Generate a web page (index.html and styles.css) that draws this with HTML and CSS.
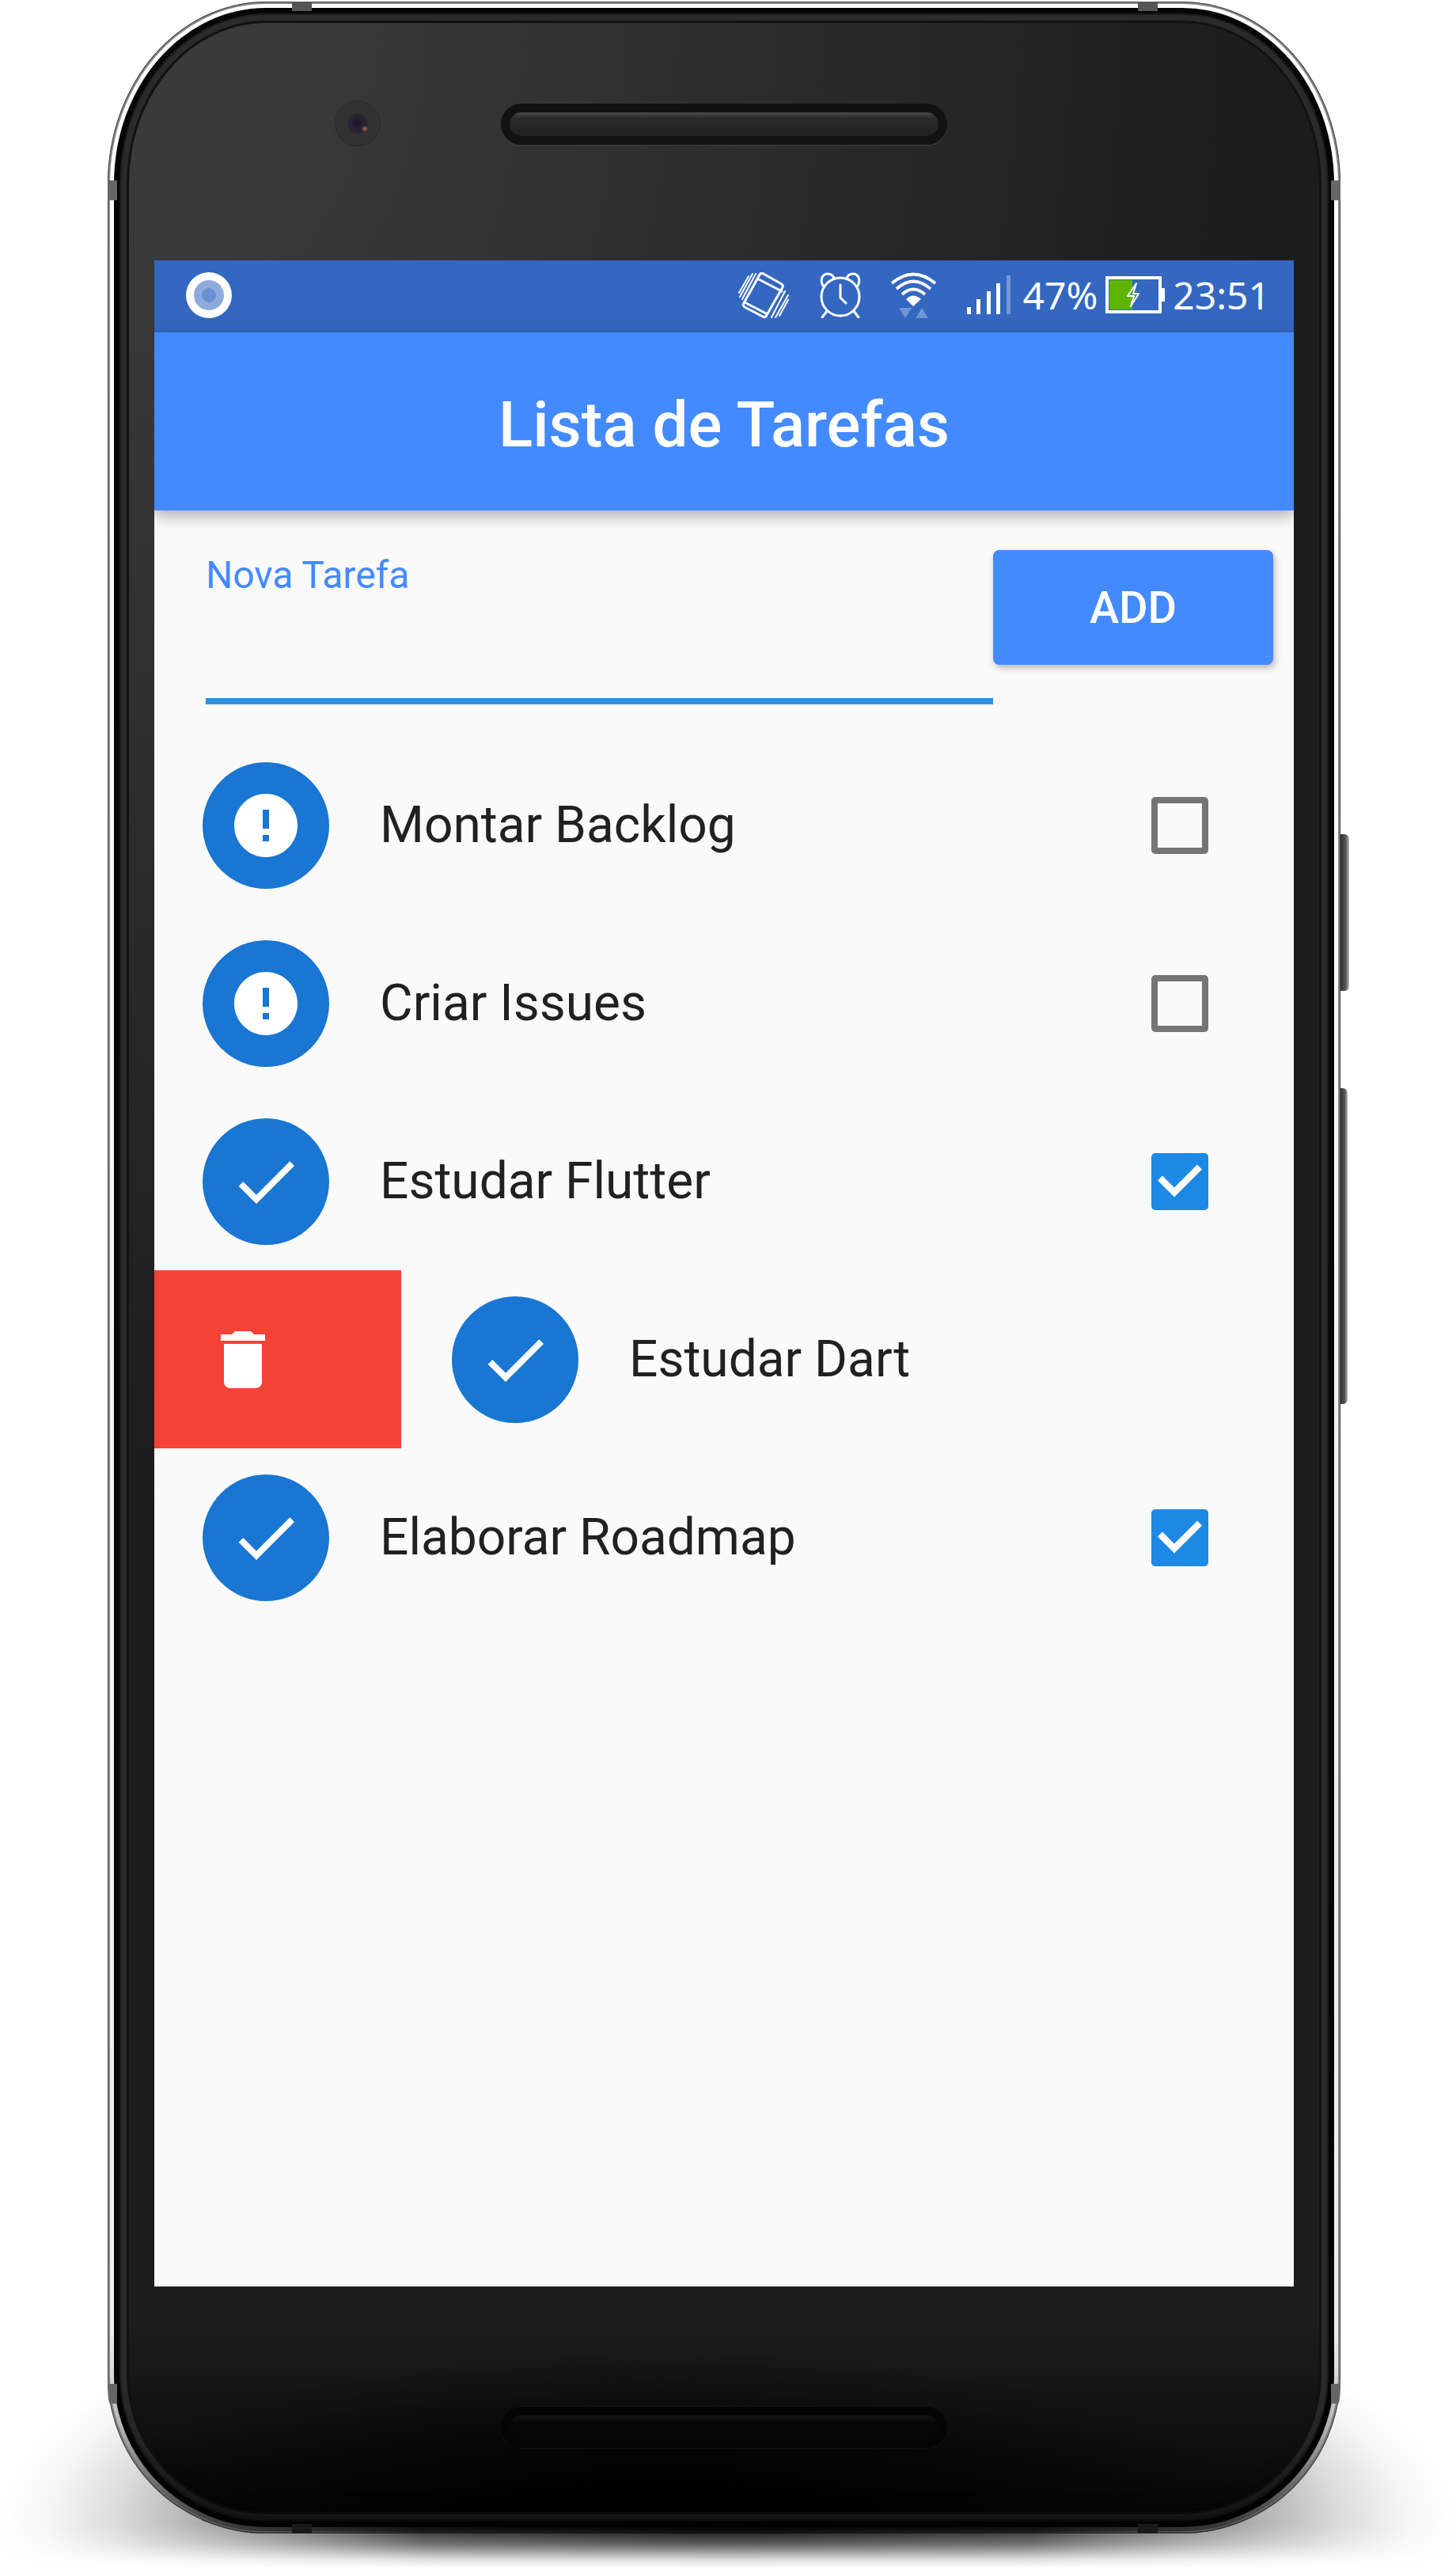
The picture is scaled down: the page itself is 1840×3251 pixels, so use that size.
FILE: index.html
```html
<!DOCTYPE html>
<html lang="pt-BR">
<head>
<meta charset="utf-8">
<meta name="viewport" content="width=device-width, initial-scale=1">
<title>Lista de Tarefas</title>
<link rel="stylesheet" href="styles.css">
</head>
<body>
<svg class="sprite" aria-hidden="true">
  <symbol id="icon-check" viewBox="0 0 24 24"><path d="M9 16.17 4.83 12l-1.42 1.41L9 19 21 7l-1.41-1.41z"/></symbol>
  <symbol id="icon-error" viewBox="0 0 24 24"><path d="M12 2C6.48 2 2 6.48 2 12s4.48 10 10 10 10-4.48 10-10S17.52 2 12 2zm1 15h-2v-2h2v2zm0-4h-2V7h2v6z"/></symbol>
</svg>

<div class="device">
  <span class="side-key power"></span>
  <span class="side-key volume"></span>
  <span class="band top left"></span>
  <span class="band top right"></span>
  <span class="band bottom left"></span>
  <span class="band bottom right"></span>
  <span class="band side upper west"></span>
  <span class="band side upper east"></span>
  <span class="band side lower west"></span>
  <span class="band side lower east"></span>

  <div class="glass">
    <div class="forehead">
      <span class="camera"></span>
      <span class="speaker"></span>
    </div>

    <div class="screen">
      <div class="status-bar">
        <svg class="record" width="58" height="58" viewBox="0 0 58 58"><circle cx="29" cy="29" r="29" fill="#fff"/><circle cx="29" cy="29" r="19" fill="#8faadc"/><circle cx="29" cy="29" r="9" fill="#6a90d2"/></svg>
        <div class="status-icons">
          <svg width="66" height="58" viewBox="0 0 66 58" fill="none" stroke="#fff" stroke-width="3" stroke-linecap="round" stroke-linejoin="round">
            <path d="M28 3q2-3 5-1l23 13q2 2 1 4L37 54q-2 4-5 2L9 44q-3-2-1-5zM27 9l29 15M9 38l27 14"/>
            <path d="M23 2 6 34M19 2 3 31M14 5 2 26M60 24 43 57M64 29 48 57M64 35 53 55" stroke-width="2"/>
          </svg>
          <svg width="52" height="58" viewBox="0 0 52 58" fill="none" stroke="#fff" stroke-width="3" stroke-linecap="round" stroke-linejoin="round">
            <ellipse cx="26" cy="31" rx="24" ry="24"/>
            <path d="M4 17C0 10 3 2 10 2c4 0 7 2 8 6M48 17c4-7 1-15-6-15-4 0-7 2-8 6M26 16v16l7 7M9 49l-6 8M43 49l6 8"/>
          </svg>
          <svg width="58" height="58" viewBox="0 0 58 58" fill="none" stroke="#fff" stroke-width="4">
            <path d="M1 14Q28-9 56 14M7 21q21-19 43 0M14 28q14-13 29 0"/>
            <path d="M19 34q9-9 19 0l-10 9z" fill="#fff" stroke="none"/>
            <path d="M10 45h16l-8 13zM31 58l8-13 8 13z" fill="#7094d6" stroke="none"/>
          </svg>
          <svg width="56" height="50" viewBox="0 0 56 50" fill="#fff">
            <path d="M0 40h5v9H0zM12 30h5v19h-5zM25 20h5v29h-5zM37 10h5v39h-5z"/>
            <path d="M50 0h5v49h-5z" fill="#7597d6"/>
          </svg>
        </div>
        <div class="status-text">
          <span>47%</span>
          <svg width="75" height="48" viewBox="0 0 75 48">
            <path d="M5 5h29v37H5z" fill="#5fb400"/>
            <path d="M2 2h67v43H2z" fill="none" stroke="#fff" stroke-width="4"/>
            <path d="M70 15h5v17h-5z" fill="#fff"/>
            <path d="M39 9 28 25h8l-4 13 10-16h-7z" fill="#4a9c3c" stroke="#fff" stroke-width="2" stroke-linejoin="round"/>
          </svg>
          <time>23:51</time>
        </div>
      </div>

      <header class="app-bar"><h1>Lista de Tarefas</h1></header>

      <form class="new-task">
        <div class="field">
          <label for="task">Nova Tarefa</label>
          <input id="task" type="text">
        </div>
        <button class="add" type="button">ADD</button>
      </form>

      <ul class="tasks">
        <li class="row"><label class="task">
          <span class="avatar"><svg><use href="#icon-error"/></svg></span>
          <span class="name">Montar Backlog</span>
          <input type="checkbox">
        </label></li>
        <li class="row"><label class="task">
          <span class="avatar"><svg><use href="#icon-error"/></svg></span>
          <span class="name">Criar Issues</span>
          <input type="checkbox">
        </label></li>
        <li class="row"><label class="task">
          <span class="avatar"><svg><use href="#icon-check"/></svg></span>
          <span class="name">Estudar Flutter</span>
          <input type="checkbox" checked>
        </label></li>
        <li class="row swiped">
          <button class="delete" type="button" aria-label="Excluir"><svg viewBox="0 0 24 24"><path d="M6 19c0 1.100.9 2 2 2h8c1.100 0 2-.9 2-2V7H6zM19 4h-3.500l-1-1h-5l-1 1H5v2h14z"/></svg></button>
          <div class="task">
            <span class="avatar"><svg><use href="#icon-check"/></svg></span>
            <span class="name">Estudar Dart</span>
          </div>
        </li>
        <li class="row"><label class="task">
          <span class="avatar"><svg><use href="#icon-check"/></svg></span>
          <span class="name">Elaborar Roadmap</span>
          <input type="checkbox" checked>
        </label></li>
      </ul>
    </div>

    <div class="chin"><span class="speaker"></span></div>
  </div>
</div>
</body>
</html>
```

FILE: styles.css
```css
* { box-sizing: border-box; }

body {
  margin: 0;
  padding: 2px 146px 50px 136px;
  background: #fff;
  font-family: Roboto, "Liberation Sans", sans-serif;
  overflow-x: hidden;
}

.sprite { display: none; }

/* Phone body */
.device {
  position: relative;
  z-index: 0;
  padding: 8px;
  border-radius: 200px / 230px 230px 200px 200px;
  background: linear-gradient(#fff 0, #eee 92%, #bbb 96%, #555 100%);
  box-shadow: inset 0 0 0 1px #444, inset 0 0 0 3px #888;
}

/* Shadow on the ground below the phone */
.device::before {
  content: "";
  position: absolute;
  z-index: -2;
  inset: auto -146px -44px -136px;
  height: 340px;
  background: radial-gradient(ellipse 50% 100% at 50% 85%, #000 0, #000000d9 42%, #000000a6 52%, #00000059 70%, #00000024 84%, #0000000a 93%, transparent 100%);
  mask-image: linear-gradient(#000 84%, #000000a6 91%, #00000021 97%, transparent);
}

.side-key {
  position: absolute;
  z-index: -1;
  left: 100%;
  border-radius: 0 6px 6px 0;
  background: linear-gradient(90deg, #333, #555 60%, #bbb);
}
.power { top: 1052px; width: 11px; height: 198px; }
.volume { top: 1373px; width: 9px; height: 399px; }

/* Antenna bands */
.band { position: absolute; background: #555; z-index: 1; }
.band.top, .band.bottom { width: 25px; height: 12px; }
.band.top { top: 0; }
.band.bottom { bottom: 0; background: #191919; }
.band.left { left: 233px; }
.band.right { right: 231px; }
.band.side { width: 12px; height: 25px; background: #666; }
.band.west { left: 0; }
.band.east { right: 0; }
.band.upper { top: 226px; }
.band.lower { bottom: 164px; }
.band.lower.west { border-bottom-left-radius: 3px 25px; }
.band.lower.east { border-bottom-right-radius: 3px 25px; }

.glass {
  padding: 0 51px;
  border-radius: 192px / 222px 222px 192px 192px;
  background:
    linear-gradient(transparent 92%, #000000b0 99%),
    radial-gradient(ellipse 50% 7% at 45% 100%, #000 20%, transparent),
    radial-gradient(ellipse 95% 60% at 0 0, #3a3a3a 15%, transparent);
  background-color: #1c1c1c;
  box-shadow: inset 0 -30px 20px -10px #000000b0, inset 0 0 0 7px #060606, inset 0 0 0 9px #1c1c1c, inset 0 0 0 16px #2b2b2b, inset 0 0 0 19px #121212;
}

.forehead, .chin {
  display: grid;
  grid-template-columns: 1fr 564px 1fr;
}
.forehead { height: 319px; padding-top: 117px; }
.chin { height: 304px; padding-top: 152px; }

.camera {
  justify-self: end;
  width: 58px;
  height: 58px;
  margin-right: 152px;
  border-radius: 50%;
  border: 1px solid #292929;
  background:
    radial-gradient(circle at 66% 62%, #c07060 0, #c0706000 8%),
    radial-gradient(circle, #1c1826 0, #2b2438 26%, #29262e 30%, #323232 34%);
}

.speaker {
  grid-column: 2;
  height: 52px;
  margin-top: 4px;
  border: 11px solid #121212;
  border-radius: 26px;
  background: linear-gradient(#4a4a4a 0, #2b2b2b 25%, #202020);
  box-shadow: 0 1px 1px #484848;
}
.chin .speaker {
  margin-top: 0;
  border-color: #040404;
  background: linear-gradient(#161616, #060606 30%);
  box-shadow: 0 0 1px 1px #121212;
}

/* App */
.screen {
  aspect-ratio: 9 / 16;
  overflow: hidden;
  background: #fafafa;
  color: #212121;
}

.status-bar {
  display: flex;
  align-items: center;
  height: 91px;
  padding: 0 30px 4px 40px;
  background: #3367c0;
  color: #fff;
}
.record { margin-right: auto; }
.status-icons { display: flex; align-items: center; gap: 38px; margin-right: 14px; }
.status-text { display: flex; align-items: center; gap: 10px; font: 48px/60px "Noto Sans", sans-serif; }

.app-bar {
  display: flex;
  align-items: center;
  justify-content: center;
  height: 225px;
  padding-top: 8px;
  background: #448aff;
  color: #fff;
  box-shadow: 0 6px 20px #00000055;
}
.app-bar h1 { margin: 0; font-size: 80px; font-weight: 500; line-height: 96px; }

.new-task {
  display: flex;
  align-items: flex-start;
  padding: 50px 26px 40px 65px;
}
.field { display: flex; flex: 1; flex-direction: column; min-width: 0; }
.field label { font-size: 48px; line-height: 64px; color: #448aff; }
.field input {
  height: 131px;
  padding: 0;
  border: 0;
  border-bottom: 8px solid #2a93ea;
  outline: 0;
  background: none;
  color: inherit;
  font: 64px/80px Roboto, sans-serif;
}
.add {
  width: 354px;
  height: 145px;
  padding: 0;
  border: 0;
  border-radius: 8px;
  background: #448aff;
  color: #fff;
  font: 500 56px/64px Roboto, sans-serif;
  box-shadow: 2px 4px 8px #00000044;
}

.tasks { margin: 0; padding: 0; list-style: none; }
.row { display: flex; height: 225px; overflow: hidden; }
.task {
  display: flex;
  flex: none;
  align-items: center;
  gap: 64px;
  width: 100%;
  padding: 0 108px 0 61px;
}
.avatar {
  display: grid;
  place-items: center;
  width: 160px;
  height: 160px;
  border-radius: 50%;
  background: #1976d2;
}
.avatar svg, .delete svg { width: 96px; height: 96px; fill: #fff; }
.name { flex: 1; font-size: 64px; line-height: 80px; }

.task input {
  appearance: none;
  width: 72px;
  height: 72px;
  margin: 0;
  border: 8px solid #757575;
  border-radius: 5px;
}
.task input:checked { border: 0; background: #1e88e5; }
.task input:checked::before {
  content: "";
  display: block;
  height: 100%;
  background: #fff;
  clip-path: polygon(8px 35px, 14px 29px, 29px 44px, 58px 15px, 64px 21px, 29px 56px);
}

.swiped { gap: 3px; }
.delete {
  display: flex;
  flex: none;
  align-items: center;
  width: 312px;
  padding: 0 64px;
  border: 0;
  background: #f44336;
}
```
